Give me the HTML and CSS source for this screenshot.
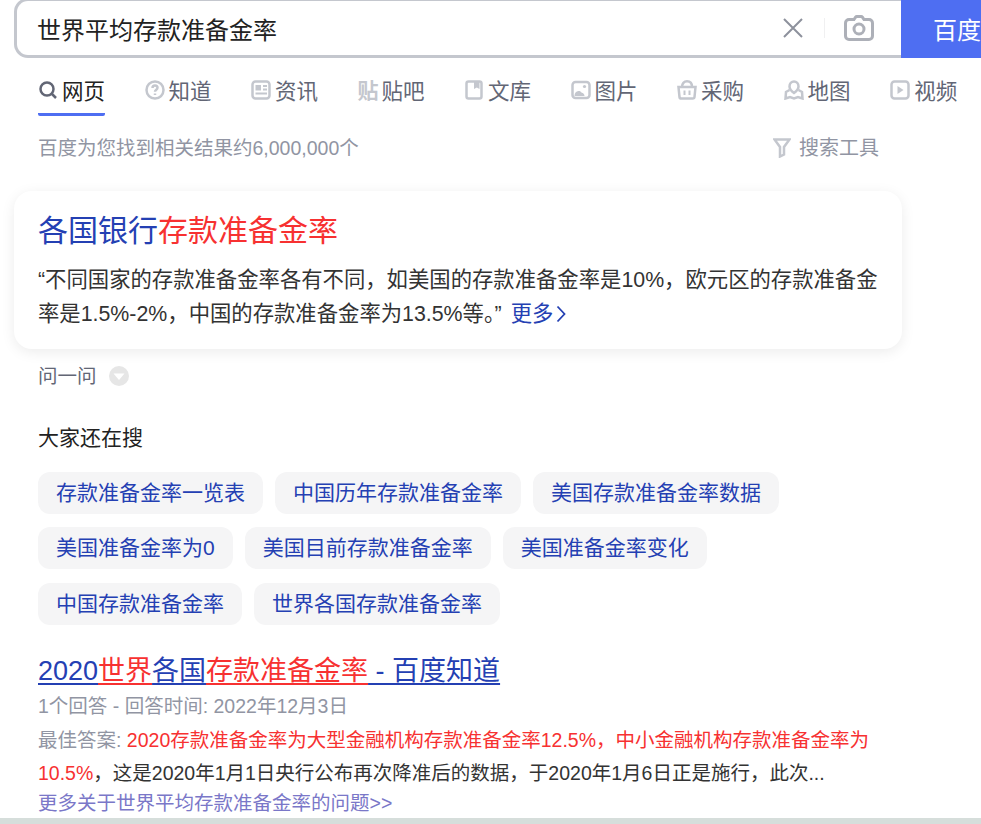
FILE: index.html
```html
<!DOCTYPE html>
<html lang="zh-CN">
<head>
  <meta charset="UTF-8">
  <title>世界平均存款准备金率_百度搜索</title>
  <link rel="stylesheet" href="styles.css">
</head>
<body>
  <div class="search">
    <div class="search-box">
      <span class="query">世界平均存款准备金率</span>
      <svg class="clear" viewBox="0 0 20 20"><path d="M1 1l18 18M19 1L1 19"/></svg>
      <span class="divider"></span>
      <svg class="camera" viewBox="0 0 30 26"><path d="M10 4.500l1.600-2.400c.3-.4.7-.6 1.200-.6h4.400c.5 0 .9.2 1.200.6L20 4.500h5c1.900 0 3.500 1.600 3.500 3.500v13c0 1.900-1.600 3.500-3.500 3.500H5c-1.900 0-3.500-1.600-3.500-3.500V8c0-1.900 1.600-3.500 3.500-3.500z"/><circle cx="15" cy="14" r="5"/></svg>
    </div>
    <button class="search-btn">百度一下</button>
  </div>

  <nav class="tabs">
    <a class="tab active">
      <svg class="tab-icon" viewBox="0 0 20 20"><circle cx="9" cy="9" r="6.500"/><path d="M14 14l4 4"/></svg>网页
    </a>
    <a class="tab">
      <svg class="tab-icon" viewBox="0 0 20 20"><circle cx="10" cy="10" r="8.500"/><path d="M7.500 8c0-1.500 1.100-2.500 2.500-2.500s2.500 1 2.500 2.300c0 1.900-2.500 1.900-2.500 3.900"/><path d="M10 13.500v1.500"/></svg>知道
    </a>
    <a class="tab">
      <svg class="tab-icon" viewBox="0 0 20 20"><rect x="1.500" y="1.500" width="17" height="17" rx="3"/><rect class="solid" x="4.500" y="5" width="5.500" height="5.500"/><path class="thin" d="M12 6h4M12 9.500h4M4.500 13.500h11.500"/></svg>资讯
    </a>
    <a class="tab">
      <span class="tab-glyph">贴</span>贴吧
    </a>
    <a class="tab">
      <svg class="tab-icon" viewBox="0 0 20 20"><path d="M4.500 1.500h11c1.100 0 2 .9 2 2v13c0 1.100-.9 2-2 2h-11c-1.100 0-2-.9-2-2v-13c0-1.100.9-2 2-2z"/><path class="solid" d="M10 1.500h5.500v7.500l-2.700-1.500-2.800 1.500z"/></svg>文库
    </a>
    <a class="tab">
      <svg class="tab-icon" viewBox="0 0 20 20"><rect x="1.500" y="2" width="17" height="16" rx="3"/><circle class="solid" cx="13.500" cy="6.500" r="1.600"/><path class="solid" d="M3.500 16c0-2.800 1.500-5 4-5 1.500 0 2.500.7 3.200 1.700 1.500 0 2.800 1.400 2.800 3.300z"/></svg>图片
    </a>
    <a class="tab">
      <svg class="tab-icon" viewBox="0 0 20 20"><path d="M1.500 7h17l-1 10c-.1.9-.9 1.500-1.800 1.500H4.300c-.9 0-1.700-.6-1.800-1.500z"/><path d="M5 7C5 3.500 7 1.300 10 1.300S15 3.500 15 7"/><path class="thin" d="M7.500 10.500v4.500M12.500 10.500v4.500"/></svg>采购
    </a>
    <a class="tab">
      <svg class="tab-icon" viewBox="0 0 20 20"><path d="M10 13c-2.800-2-4.500-4-4.500-6.500C5.500 3.500 7.500 1.500 10 1.500s4.500 2 4.500 5C14.500 9 12.800 11 10 13z"/><path d="M5.500 10L2 12l-.5 6.500 4.500-1.500 4 1.500 4-1.500 4.500 1.500L18 12l-3.500-2"/></svg>地图
    </a>
    <a class="tab">
      <svg class="tab-icon" viewBox="0 0 20 20"><rect x="1.500" y="1.500" width="17" height="17" rx="3"/><path class="solid" d="M7.500 6l6 4-6 4z"/></svg>视频
    </a>
  </nav>

  <div class="count-row">
    <span>百度为您找到相关结果约6,000,000个</span>
    <span class="tools">
      <svg class="funnel" viewBox="0 0 18 20"><path d="M1.500 1.500h15L11 9v7.500l-4 2V9z"/></svg>搜索工具
    </span>
  </div>

  <section class="card">
    <h2 class="card-title">各国银行<em>存款准备金率</em></h2>
    <p class="card-text">“不同国家的存款准备金率各有不同，如美国的存款准备金率是10%，欧元区的存款准备金率是1.5%-2%，中国的存款准备金率为13.5%等。” <a class="more">更多<svg class="chevron" viewBox="0 0 10 18"><path d="M1.500 1.500L8.500 9l-7 7.500"/></svg></a></p>
  </section>

  <div class="ask">
    问一问
    <svg class="ask-icon" viewBox="0 0 20 20"><circle cx="10" cy="10" r="10"/><path d="M4.500 7.500h11L10 14z"/></svg>
  </div>

  <h3 class="also-title">大家还在搜</h3>
  <div class="chips">
    <a class="chip">存款准备金率一览表</a>
    <a class="chip">中国历年存款准备金率</a>
    <a class="chip">美国存款准备金率数据</a>
    <a class="chip">美国准备金率为0</a>
    <a class="chip">美国目前存款准备金率</a>
    <a class="chip">美国准备金率变化</a>
    <a class="chip">中国存款准备金率</a>
    <a class="chip">世界各国存款准备金率</a>
  </div>

  <article class="result">
    <h3 class="result-title"><a>2020<em>世界</em>各国<em>存款准备金率</em> - 百度知道</a></h3>
    <div class="result-meta">1个回答 - 回答时间: 2022年12月3日</div>
    <p class="result-text"><span class="label">最佳答案:</span> <em>2020存款准备金率为大型金融机构存款准备金率12.5%，中小金融机构存款准备金率为10.5%</em>，这是2020年1月1日央行公布再次降准后的数据，于2020年1月6日正是施行，此次...</p>
    <a class="result-more">更多关于世界平均存款准备金率的问题&gt;&gt;</a>
  </article>

  <div class="bottom-strip"></div>
</body>
</html>
```

FILE: styles.css
```css
html, body {
  height: 824px;
  overflow: hidden;
}

body {
  margin: 0;
  font-family: "Liberation Sans", "Noto Sans CJK SC", sans-serif;
  font-size: 21px;
  color: #333;
  background: #fff;
}

em {
  font-style: normal;
  color: #f73131;
}

h2, h3, p {
  margin: 0;
  font-weight: normal;
}

/* search bar */
.search {
  display: flex;
  width: 967px;
  height: 60px;
  margin: -2px 0 0 14px;
  overflow: hidden;
}

.search-box {
  display: flex;
  align-items: center;
  flex: 0 0 887px;
  box-sizing: border-box;
  padding: 0 27px 0 20px;
  border: 3px solid #c4c7ce;
  border-right: none;
  border-radius: 14px 0 0 14px;
}

.query {
  flex: 1;
  font-size: 24px;
  color: #222;
}

.clear {
  width: 20px;
  height: 20px;
  fill: none;
  stroke: #8d919c;
  stroke-width: 2;
}

.divider {
  width: 1px;
  height: 20px;
  margin: 0 19px 0 21px;
  background: #f0f0f1;
}

.camera {
  width: 30px;
  height: 26px;
  fill: none;
  stroke: #adb0b8;
  stroke-width: 3;
}

.search-btn {
  flex: 0 0 130px;
  padding: 0 0 0 32px;
  border: none;
  text-align: left;
  white-space: nowrap;
  font: 24px "Liberation Sans", "Noto Sans CJK SC", sans-serif;
  color: #fff;
  background: #4e6ef2;
}

/* tabs */
.tabs {
  display: flex;
  gap: 39.500px;
  margin: 18px 0 0 38px;
}

.tab {
  display: flex;
  align-items: center;
  gap: 4px;
  height: 26px;
  padding-bottom: 11px;
  border-bottom: 3px solid transparent;
  font-size: 21.500px;
  color: #626675;
}

.tab.active {
  border-bottom-color: #4e6ef2;
  border-radius: 2px;
  color: #222;
}

.tab-icon {
  width: 20px;
  height: 20px;
  margin-top: 2px;
  fill: none;
  stroke: #c4c7ce;
  stroke-width: 2.500;
}

.tab-icon .solid {
  fill: #c4c7ce;
  stroke: none;
}

.tab-icon .thin {
  stroke-width: 2;
}

.tab.active .tab-icon {
  stroke: #626675;
}

.tab-glyph {
  width: 20px;
  font-size: 21px;
  font-weight: bold;
  color: #c4c7ce;
}

/* result count */
.count-row {
  display: flex;
  justify-content: space-between;
  width: 841px;
  margin: 17px 0 0 38px;
  font-size: 19.500px;
  line-height: 30px;
  color: #9195a3;
}

.tools {
  display: flex;
  align-items: center;
  gap: 8px;
  font-size: 20px;
}

.funnel {
  width: 18px;
  height: 20px;
  fill: none;
  stroke: #c4c7ce;
  stroke-width: 2.500;
}

/* answer card */
.card {
  width: 888px;
  box-sizing: border-box;
  margin: 28px 0 0 14px;
  padding: 20px 17px 18px 24px;
  border-radius: 18px;
  box-shadow: 0 3px 14px rgba(0, 0, 0, 0.08);
}

.card-title {
  font-size: 30px;
  line-height: 40px;
  color: #2440b3;
}

.card-text {
  margin-top: 12px;
  font-size: 21.350px;
  line-height: 34px;
}

.more {
  margin-left: 3px;
  color: #2440b3;
}

.chevron {
  width: 10px;
  height: 18px;
  margin-left: 3px;
  vertical-align: -2px;
  fill: none;
  stroke: #2440b3;
  stroke-width: 1.800;
}

.ask {
  display: flex;
  align-items: center;
  gap: 12px;
  margin: 12px 0 0 38px;
  font-size: 19.500px;
  line-height: 30px;
  color: #626675;
}

.ask-icon {
  width: 20px;
  height: 20px;
  fill: #e6e6e6;
}

.ask-icon path {
  fill: #fff;
}

/* related searches */
.also-title {
  margin: 32px 0 0 38px;
  font-size: 21px;
  line-height: 30px;
  color: #222;
}

.chips {
  display: flex;
  flex-wrap: wrap;
  gap: 13.400px 12px;
  width: 850px;
  margin: 19px 0 0 38px;
}

.chip {
  height: 42px;
  padding: 0 18px;
  border-radius: 12px;
  line-height: 42px;
  color: #2440b3;
  background: #f5f5f6;
}

/* search result */
.result {
  width: 845px;
  margin: 26px 0 0 38px;
}

.result-title {
  font-size: 27px;
  line-height: 40px;
}

.result-title a {
  color: #2440b3;
  text-decoration: underline 2px;
  text-underline-offset: 3px;
}

.result-title em {
  text-decoration: underline 2px #f73131;
  text-underline-offset: 3px;
}

.result-meta {
  font-size: 19.500px;
  line-height: 30px;
  color: #9195a3;
}

.result-text {
  margin-top: 3px;
  font-size: 19.500px;
  line-height: 33px;
}

.label {
  color: #9195a3;
}

.result-more {
  display: block;
  margin-top: -2px;
  font-size: 19.500px;
  line-height: 30px;
  color: #7a77c8;
}

.bottom-strip {
  height: 6px;
  background: #d6dedb;
}
```
